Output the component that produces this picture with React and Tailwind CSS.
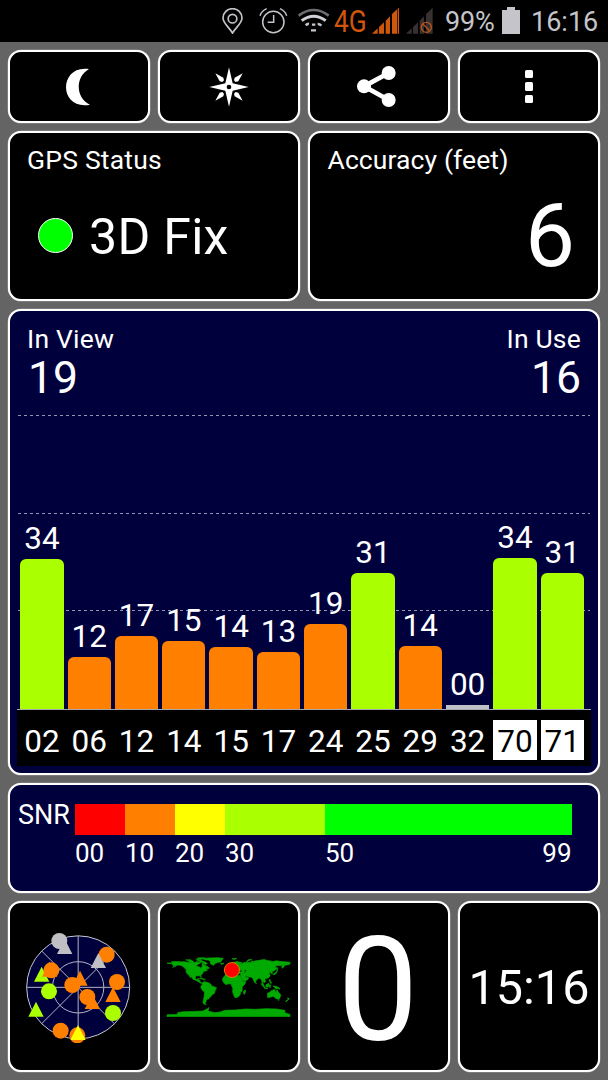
import React from "react";

const satellites = [
  { id: "02", snr: "34", height: 150, color: "bg-[#aaff00]" },
  { id: "06", snr: "12", height: 52, color: "bg-[#ff8000]" },
  { id: "12", snr: "17", height: 73.5, color: "bg-[#ff8000]" },
  { id: "14", snr: "15", height: 68, color: "bg-[#ff8000]" },
  { id: "15", snr: "14", height: 62, color: "bg-[#ff8000]" },
  { id: "17", snr: "13", height: 57.5, color: "bg-[#ff8000]" },
  { id: "24", snr: "19", height: 85, color: "bg-[#ff8000]" },
  { id: "25", snr: "31", height: 136, color: "bg-[#aaff00]" },
  { id: "29", snr: "14", height: 63, color: "bg-[#ff8000]" },
  { id: "32", snr: "00", height: 4.5, color: "bg-[#c0c0c8]" },
  { id: "70", snr: "34", height: 151, color: "bg-[#aaff00]", boxed: true },
  { id: "71", snr: "31", height: 136, color: "bg-[#aaff00]", boxed: true },
];

const snrScale = [
  { label: "00", width: "w-[50px]", color: "bg-[#ff0000]" },
  { label: "10", width: "w-[50px]", color: "bg-[#ff8000]" },
  { label: "20", width: "w-[50px]", color: "bg-[#ffff00]" },
  { label: "30", width: "w-[100px]", color: "bg-[#aaff00]" },
  { label: "50", end: "99", width: "w-[246.500px]", color: "bg-[#00ff00]" },
];

const GREEN = "#aaff00";
const ORANGE = "#ff8000";
const GREY = "#c0c0c4";

// drawn in order, so later ones overlap earlier ones
const skyMarkers = [
  { type: "circle", x: 180, y: 136, fill: GREY },
  { type: "triangle", x: 196, y: 130, fill: GREY },
  { type: "circle", x: 322, y: 177, fill: ORANGE },
  { type: "triangle", x: 297, y: 172, fill: GREY },
  { type: "triangle", x: 127, y: 213, fill: GREEN },
  { type: "triangle", x: 151, y: 198, fill: ORANGE },
  { type: "circle", x: 156, y: 224, fill: ORANGE },
  { type: "circle", x: 149, y: 287, fill: GREEN },
  { type: "triangle", x: 242, y: 225, fill: ORANGE },
  { type: "circle", x: 219, y: 268, fill: ORANGE },
  { type: "circle", x: 353, y: 259, fill: ORANGE },
  { type: "triangle", x: 341, y: 274, fill: ORANGE },
  { type: "circle", x: 264, y: 304, fill: ORANGE },
  { type: "triangle", x: 279, y: 295, fill: ORANGE },
  { type: "triangle", x: 110, y: 318, fill: GREEN },
  { type: "circle", x: 341, y: 352, fill: GREEN },
  { type: "circle", x: 184, y: 405, fill: ORANGE },
  { type: "circle", x: 234, y: 419, fill: ORANGE },
  { type: "triangle", x: 236, y: 388, fill: "#ffff00" },
];

// longitude, negative latitude
const landMasses = [
  // Americas
  "-180,-66 -172,-67 -168,-65 -166,-70 -156,-71 -140,-70 -128,-70 -115,-68 -108,-68 -95,-68 -94,-72 -88,-68 -82,-69 -81,-67 -87,-64 -94,-60 -92,-57 -85,-55 -82,-53 -80,-51 -79,-54 -77,-57 -78,-62 -73,-62 -66,-58 -62,-57 -56,-52 -60,-50 -66,-50 -65,-48 -61,-46 -66,-43 -70,-43 -74,-40 -76,-35 -81,-31 -80,-25 -83,-29 -90,-29 -94,-29 -97,-27 -97,-22 -94,-18 -91,-19 -90,-21 -87,-21 -88,-16 -83,-15 -83,-10 -80,-9 -77,-8 -79,-7 -83,-8 -87,-12 -92,-14 -97,-16 -105,-20 -106,-23 -112,-29 -114,-31 -110,-23 -115,-29 -117,-33 -121,-35 -124,-40 -124,-48 -128,-51 -133,-56 -138,-59 -147,-61 -152,-59 -158,-56 -164,-54 -157,-58 -162,-59 -165,-62 -161,-64 -168,-65",
  "-73,-78 -60,-81 -30,-82 -15,-80 -20,-74 -22,-70 -32,-68 -40,-65 -43,-60 -50,-62 -54,-67 -52,-70 -58,-75 -68,-76",
  "-90,-73 -80,-74 -70,-70 -62,-66 -66,-62 -72,-64 -78,-65 -73,-68 -84,-70",
  "-117,-73 -105,-73 -102,-69 -114,-69",
  "-125,-76 -110,-76 -108,-74 -118,-73",
  "-95,-77 -80,-76 -82,-75 -93,-75",
  "-92,-81 -75,-82 -66,-81 -76,-78 -86,-78",
  "-77,-8 -72,-12 -62,-10 -52,-5 -50,0 -44,2 -35,6 -39,14 -41,22 -48,26 -53,33 -57,36 -57,38 -62,39 -65,43 -66,47 -69,51 -65,55 -71,54 -75,50 -73,40 -71,30 -70,18 -76,14 -81,6 -80,0 -77,-4",
  "-85,-22 -80,-23 -74,-20 -77,-19.5",
  "-74,-20 -68,-19 -71,-17 -74,-18",
  // Africa
  "-6,-36 10,-37 11,-33 20,-31 30,-31 33,-30 37,-22 43,-12 51,-12 47,-4 40,3 40,15 35,20 35,24 32,29 26,34 19,35 15,27 12,17 13,8 9,0 9,-4 4,-6 -8,-4 -13,-8 -17,-15 -17,-21 -10,-31",
  "49,12 50,16 47,25 44,23 44,17",
  // Eurasia
  "-9,-37 -9,-43 -2,-43 -4,-48 2,-51 8,-54 9,-57 11,-54 20,-55 22,-58 29,-60 22,-60 22,-63 25,-65 18,-61 17,-57 13,-55 11,-59 6,-58 5,-62 14,-68 25,-71 40,-67 34,-66 40,-64 44,-68 55,-68 68,-69 67,-73 73,-71 80,-73 100,-76 104,-77 113,-74 130,-71 140,-73 160,-70 180,-69 180,-65 178,-62 164,-60 163,-56 157,-51 156,-57 163,-62 155,-59 142,-59 135,-55 141,-53 140,-48 132,-43 127,-40 129,-36 126,-35 125,-39 121,-40 118,-39 122,-37 119,-35 122,-31 119,-25 114,-22 108,-21 106,-19 109,-13 105,-9 103,-11 100,-13 101,-7 104,-1 100,-5 98,-10 97,-17 91,-22 87,-21 80,-15 80,-11 77,-8 73,-17 72,-21 67,-25 57,-26 50,-30 51,-25 56,-24 59,-22 55,-17 45,-13 42,-17 35,-28 36,-36 28,-37 27,-40 41,-41 38,-44 39,-47 34,-45 31,-46 28,-42 26,-40 23,-36 19,-41 13,-45 18,-40 16,-38 10,-44 4,-43 0,-40 -2,-37",
  "-24,-65 -14,-66 -15,-64 -22,-63",
  "-5,-50 1,-51 -2,-56 -5,-58",
  "52,-71 58,-76 68,-77 58,-73 56,-71",
  "10,-79 24,-80 18,-77",
  "130,-32 136,-34 140,-36 141,-41 145,-44 142,-45 140,-41 136,-37 131,-34",
  "142,-46 144,-50 142,-54",
  "80,-9 82,-7 80,-6",
  // South-east Asia and Oceania
  "95,-6 99,-4 106,3 105,6 100,1",
  "105,6 115,8 114,9 106,8",
  "109,-2 117,-7 119,-5 116,4 110,3",
  "119,-1 125,-2 121,0 123,5 119,4",
  "120,-18 122,-18 122,-14 126,-8 124,-6 120,-13",
  "131,1 141,2 148,6 150,10 144,8 138,8 133,4",
  "114,22 122,18 126,14 130,15 131,11 137,12 135,15 140,18 142,11 146,19 153,26 150,37 146,39 140,38 136,35 131,31 124,33 115,35",
  "145,41 148,41 147,43",
  "173,35 178,38 175,41 174,38",
  "172,41 174,42 168,47 167,46",
  // Antarctica
  "-180,90 -180,85 -150,84 -148,78 -130,76 -100,75 -75,74 -62,67 -57,64 -60,74 -40,79 -25,77 -10,72 20,71 50,68 80,69 110,67 140,68 165,72 165,79 180,84 180,90",
];

function Panel({ className = "", children }) {
  return (
    <div className={`rounded-[13px] border-2 border-white ring-[0.3px] ring-white/60 ${className}`}>
      {children}
    </div>
  );
}

function StatusBar() {
  return (
    <header className="flex h-[42px] items-start bg-black pl-[222px] text-[#c4c4ca]">
      <svg className="mt-2 h-[26px] w-[21px]" viewBox="42 24 63 78" fill="none" stroke="#c4c4ca" strokeWidth="5">
        <path d="M73.500 99C65 84 45 70 45 54a28.500 28 0 0 1 57 0c0 16-20 30-28.500 45Z" />
        <circle cx="73.500" cy="56" r="13" />
      </svg>
      <svg className="ml-4 mt-2 h-[26px] w-[29px]" viewBox="153 24 87 78" fill="none" stroke="#c4c4ca" strokeWidth="4.500">
        <circle cx="196" cy="66" r="32" />
        <path d="M197 45v22h-18M156 47c3-10 9-16 20-21M236 47c-3-10-9-16-20-21" />
      </svg>
      <svg className="ml-[9px] mt-2 h-[26px] w-[34px]" viewBox="267 24 102 78" fill="none" strokeWidth="8">
        <path d="M272 47q45-34 90 0" stroke="#6c6c72" />
        <path d="M281 62q36-27 72 0" stroke="#d0d0d6" strokeWidth="9" />
        <path d="M293 76q6-5 10-4M329 72q6 0 11 5" stroke="#c4c4ca" />
        <path d="M312 74h10M309 91h15" stroke="#c4c4ca" strokeWidth="7" />
      </svg>
      <span className="ml-[3px] mt-[6px] w-[34px] origin-left scale-x-[0.85] text-[31px] leading-none text-[#cf560d]">
        4G
      </span>
      <svg className="ml-1 mt-[7px] h-[27px] w-7" viewBox="492 21 84 81" fill="#cf560d">
        <path d="M492 101 509 85v16ZM513 81l15-14v34h-15ZM533 62l13-13v52h-13ZM552 42l15-14v73h-15ZM569 26l4-3v78h-4Z" />
      </svg>
      <svg className="ml-[6px] mt-[7px] h-[27px] w-7" viewBox="597 21 84 81">
        <path
          d="M597 101 614 85v16ZM618 81l15-14v34h-15ZM638 62l13-13v52h-13ZM657 42l20-19v78h-20Z"
          fill="#37302f"
        />
        <circle cx="658" cy="82" r="15" fill="none" stroke="#b9551c" strokeWidth="4" />
        <path d="m648 72 20 20" stroke="#b9551c" strokeWidth="4" />
      </svg>
      <span className="ml-[11px] mt-[9px] w-[51px] text-[27px] leading-none tracking-[-0.2px]">99%</span>
      <svg className="ml-[6px] mt-[7px] h-[27px] w-[18px]" viewBox="0 0 18 27" fill="#c4c4ca">
        <path d="M5 0h8v3h5v24H0V3h5Z" />
      </svg>
      <span className="ml-[11px] mt-[9px] text-[27px] leading-none">16:16</span>
    </header>
  );
}

function SkyView() {
  return (
    <svg className="-ml-[1.500px] h-[110px] w-[106px]" viewBox="77 112 318 330">
      <circle cx="236.500" cy="275" r="154.500" fill="#00003c" stroke="#c8c8d0" strokeWidth="3" />
      <g fill="none" stroke="#b4b4c4" strokeWidth="3">
        <circle cx="236.500" cy="275" r="77" />
        <path d="M82 275h309M236.500 121v309M127 166l218 218M346 166 127 384" />
      </g>
      {skyMarkers.map((m, i) =>
        m.type === "circle" ? (
          <circle key={i} cx={m.x} cy={m.y} r="24" fill={m.fill} />
        ) : (
          <path key={i} d={`M${m.x} ${m.y}l23 45h-46Z`} fill={m.fill} />
        )
      )}
    </svg>
  );
}

function WorldMap() {
  return (
    <svg className="-ml-0.5 h-[61.500px] w-[123px] overflow-visible" viewBox="-180 -90 360 180">
      {landMasses.map((points) => (
        <polygon key={points} points={points} fill="#00aa00" stroke="#00aa00" strokeWidth="2" />
      ))}
      <path d="M47-37 49-42 52-46 49-46 47-43 50-37Z" fill="#000" />
      <circle cx="10" cy="-46" r="22" fill="#ff0000" stroke="#e09000" strokeWidth="2.500" />
    </svg>
  );
}

export default function App() {
  return (
    <div className="h-[1080px] w-[608px] overflow-hidden bg-[#646464] font-['Roboto',sans-serif] text-white">
      <StatusBar />

      <main className="flex flex-col gap-2 px-2 pt-2">
        {/* Toolbar */}
        <div className="grid grid-cols-4 gap-2">
          <Panel className="flex h-[73px] items-center justify-center bg-black">
            <svg className="-ml-0.5 h-[38px] w-6" viewBox="0 0 72 114" fill="#fff">
              <path d="M69 3C23-4 0 27 0 58c0 32 26 61 72 52C29 91 26 28 69 3Z" />
            </svg>
          </Panel>
          <Panel className="flex h-[73px] items-center justify-center bg-black">
            <svg className="-ml-px h-10 w-10" viewBox="-60 -60 120 120" fill="#fff">
              <path
                fillRule="evenodd"
                d="M0-59 11-11 59 0 11 11 0 59-11 11-59 0-11-11ZM0-7a7 7 0 1 0 0 14a7 7 0 1 0 0-14Z"
              />
              <path d="M-41-41-17-28-15-20-20-15-28-17ZM41-41 17-28 15-20 20-15 28-17ZM-41 41-17 28-15 20-20 15-28 17ZM41 41 17 28 15 20 20 15 28 17Z" />
            </svg>
          </Panel>
          <Panel className="flex h-[73px] items-center justify-center bg-black">
            <svg className="-ml-1.5 h-[41px] w-[39px]" viewBox="158 78 117 123" fill="#fff">
              <path d="m253 99-74 40 74 41" fill="none" stroke="#fff" strokeWidth="14" />
              <circle cx="179" cy="139" r="21" />
              <circle cx="253" cy="99" r="21" />
              <circle cx="253" cy="180" r="21" />
            </svg>
          </Panel>
          <Panel className="flex h-[73px] flex-col items-center justify-center gap-1 bg-black">
            <span className="size-[8.500px] rounded-[1.500px] bg-white" />
            <span className="size-[8.500px] rounded-[1.500px] bg-white" />
            <span className="size-[8.500px] rounded-[1.500px] bg-white" />
          </Panel>
        </div>

        {/* Fix and accuracy */}
        <div className="grid grid-cols-2 gap-2">
          <Panel className="h-[170px] bg-black pl-[17px] pt-[14px]">
            <h2 className="text-[26.500px] leading-[26px] tracking-[0.2px]">GPS Status</h2>
            <div className="mt-[39px] flex items-center">
              <span className="-mt-1 ml-[11px] size-[35px] rounded-full border border-white bg-[#00ff00]" />
              <span className="ml-4 text-[50px] leading-[50px] tracking-[0.3px]">3D Fix</span>
            </div>
          </Panel>
          <Panel className="h-[170px] bg-black pl-[17.500px] pr-[23px] pt-[14px]">
            <h2 className="text-[26.500px] leading-[26px] tracking-[0.1px]">Accuracy (feet)</h2>
            <p className="mt-[18px] text-right text-[89px] leading-none">6</p>
          </Panel>
        </div>

        {/* Satellite signal bars */}
        <Panel className="relative h-[466px] bg-[#00003c] px-[7px]">
          <div className="flex h-[85px] justify-between pl-[10px] pr-[10px] pt-[15px]">
            <div>
              <h2 className="text-[26.500px] leading-[26px] tracking-[0.2px]">In View</h2>
              <p className="ml-px mt-1 text-[44.500px] leading-[44px]">19</p>
            </div>
            <div className="text-right">
              <h2 className="text-[26.500px] leading-[26px] tracking-[0.2px]">In Use</h2>
              <p className="mt-1 text-[44.500px] leading-[44px]">16</p>
            </div>
          </div>

          <svg className="absolute left-2 top-[104px] h-[198px] w-[572px]" stroke="#9494ac" strokeDasharray="3 3">
            <path d="M0 .5h573M0 98.500h573M0 195.500h573" />
          </svg>

          <div className="relative flex h-[313px] items-end gap-1 px-[3.300px]">
            {satellites.map((sat) => (
              <div key={sat.id} className="flex w-[43.300px] shrink-0 flex-col items-center">
                <span className="mb-[5px] text-[31.500px] leading-[31px]">{sat.snr}</span>
                <div
                  className={`w-full ${sat.snr === "00" ? "" : "rounded-t-[6px]"} ${sat.color}`}
                  style={{ height: sat.height }}
                />
              </div>
            ))}
          </div>
          <div className="flex h-[57px] items-center gap-1 border-t border-[#a8a8b0] bg-black px-[3.300px] pt-[3px]">
            {satellites.map((sat) => (
              <div
                key={sat.id}
                className={`flex h-10 w-[43.300px] shrink-0 items-center justify-center pt-[3px] text-[31.500px] leading-[31px] ${
                  sat.boxed ? "bg-white text-black" : ""
                }`}
              >
                {sat.id}
              </div>
            ))}
          </div>
        </Panel>

        {/* SNR legend */}
        <Panel className="flex h-[110px] bg-[#00003c] pl-2 pt-[19px]">
          <span className="-mt-0.5 w-[57px] text-[27px] leading-[26px]">SNR</span>
          <div className="flex">
            {snrScale.map((step) => (
              <div key={step.label} className={step.width}>
                <div className={`h-[31px] ${step.color}`} />
                <div className="mt-[5px] flex justify-between text-[26px] leading-none">
                  <span>{step.label}</span>
                  {step.end && <span>{step.end}</span>}
                </div>
              </div>
            ))}
          </div>
        </Panel>

        {/* Bottom tiles */}
        <div className="grid grid-cols-4 gap-2">
          <Panel className="flex h-[171px] justify-center bg-black pt-[29.500px]">
            <SkyView />
          </Panel>
          <Panel className="flex h-[171px] justify-center bg-black pt-[52px]">
            <WorldMap />
          </Panel>
          <Panel className="flex h-[171px] items-center justify-center bg-black">
            <span className="-ml-0.5 mt-2 text-[144px] leading-none">0</span>
          </Panel>
          <Panel className="flex h-[171px] items-center justify-center bg-black">
            <span className="mt-px text-[48.500px] leading-[49px]">15:16</span>
          </Panel>
        </div>
      </main>
    </div>
  );
}
